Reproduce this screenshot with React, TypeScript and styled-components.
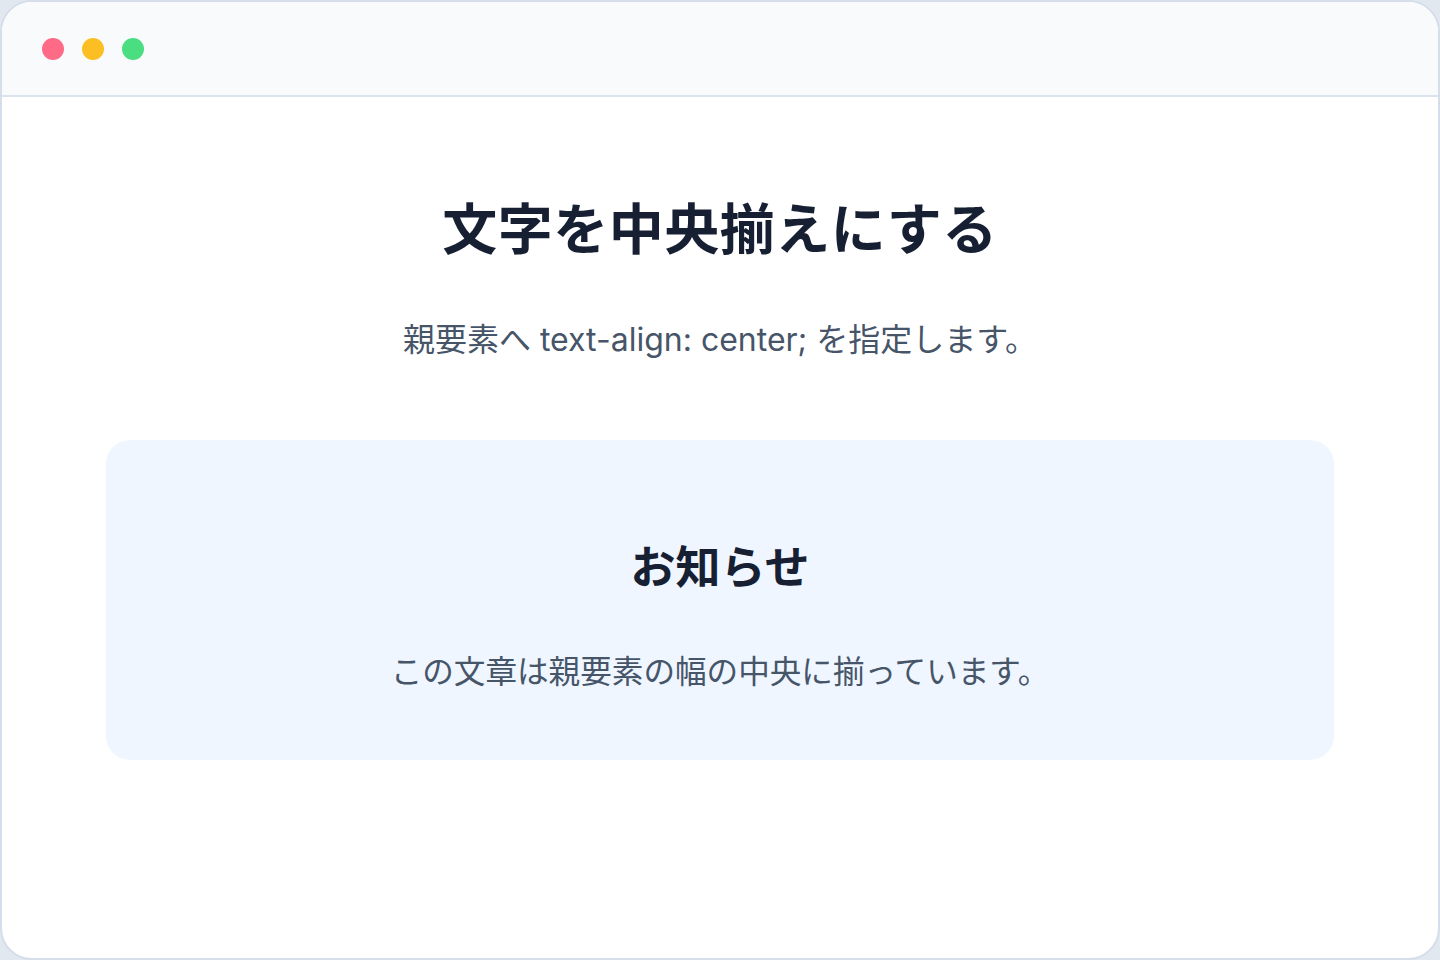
import React from "react";
import styled, { createGlobalStyle } from "styled-components";

const GlobalStyle = createGlobalStyle`
  html, body {
    margin: 0;
    padding: 0;
    background: #e2e8f0;
  }
  body {
    font-family: "Inter", "Noto Sans CJK JP", sans-serif;
  }
`;

const Window = styled.div`
  box-sizing: border-box;
  width: 1440px;
  height: 960px;
  background: #ffffff;
  border: 2px solid #d5deea;
  border-radius: 32px;
  overflow: hidden;
  display: flex;
  flex-direction: column;
`;

const TitleBar = styled.div`
  box-sizing: border-box;
  height: 95px;
  flex-shrink: 0;
  display: flex;
  align-items: center;
  gap: 18px;
  padding: 0 0 0 40px;
  background: #f8fafc;
  border-bottom: 2px solid #dbe3ee;
`;

const Dot = styled.span<{ $color: string }>`
  width: 22px;
  height: 22px;
  border-radius: 50%;
  background: ${p => p.$color};
`;

const Content = styled.main`
  display: flex;
  flex-direction: column;
  align-items: stretch;
  padding: 96px 104px 0;
  text-align: center;
`;

const Title = styled.h1`
  margin: 0;
  font-size: 55px;
  line-height: 72px;
  font-weight: 700;
  color: #172033;
  letter-spacing: 0.5px;
`;

const Lead = styled.p`
  margin: 55px 0 0;
  font-size: 32px;
  line-height: 40px;
  color: #475569;
`;

const Card = styled.section`
  margin-top: 80px;
  padding: 100px 40px 68px;
  background: #eff6ff;
  border-radius: 24px;
`;

const CardTitle = styled.h2`
  margin: 0;
  font-size: 45px;
  line-height: 56px;
  font-weight: 700;
  color: #172033;
`;

const CardText = styled.p`
  margin: 56px 0 0;
  font-size: 31.6px;
  line-height: 40px;
  color: #475569;
`;

const App: React.FC = () => {
  return (
    <>
      <GlobalStyle />
      <Window>
        <TitleBar>
          <Dot $color="#ff6b86" />
          <Dot $color="#fbbf24" />
          <Dot $color="#4ade80" />
        </TitleBar>
        <Content>
          <Title>文字を中央揃えにする</Title>
          <Lead>親要素へ text-align: center; を指定します。</Lead>
          <Card>
            <CardTitle>お知らせ</CardTitle>
            <CardText>この文章は親要素の幅の中央に揃っています。</CardText>
          </Card>
        </Content>
      </Window>
    </>
  );
};

export default App;
